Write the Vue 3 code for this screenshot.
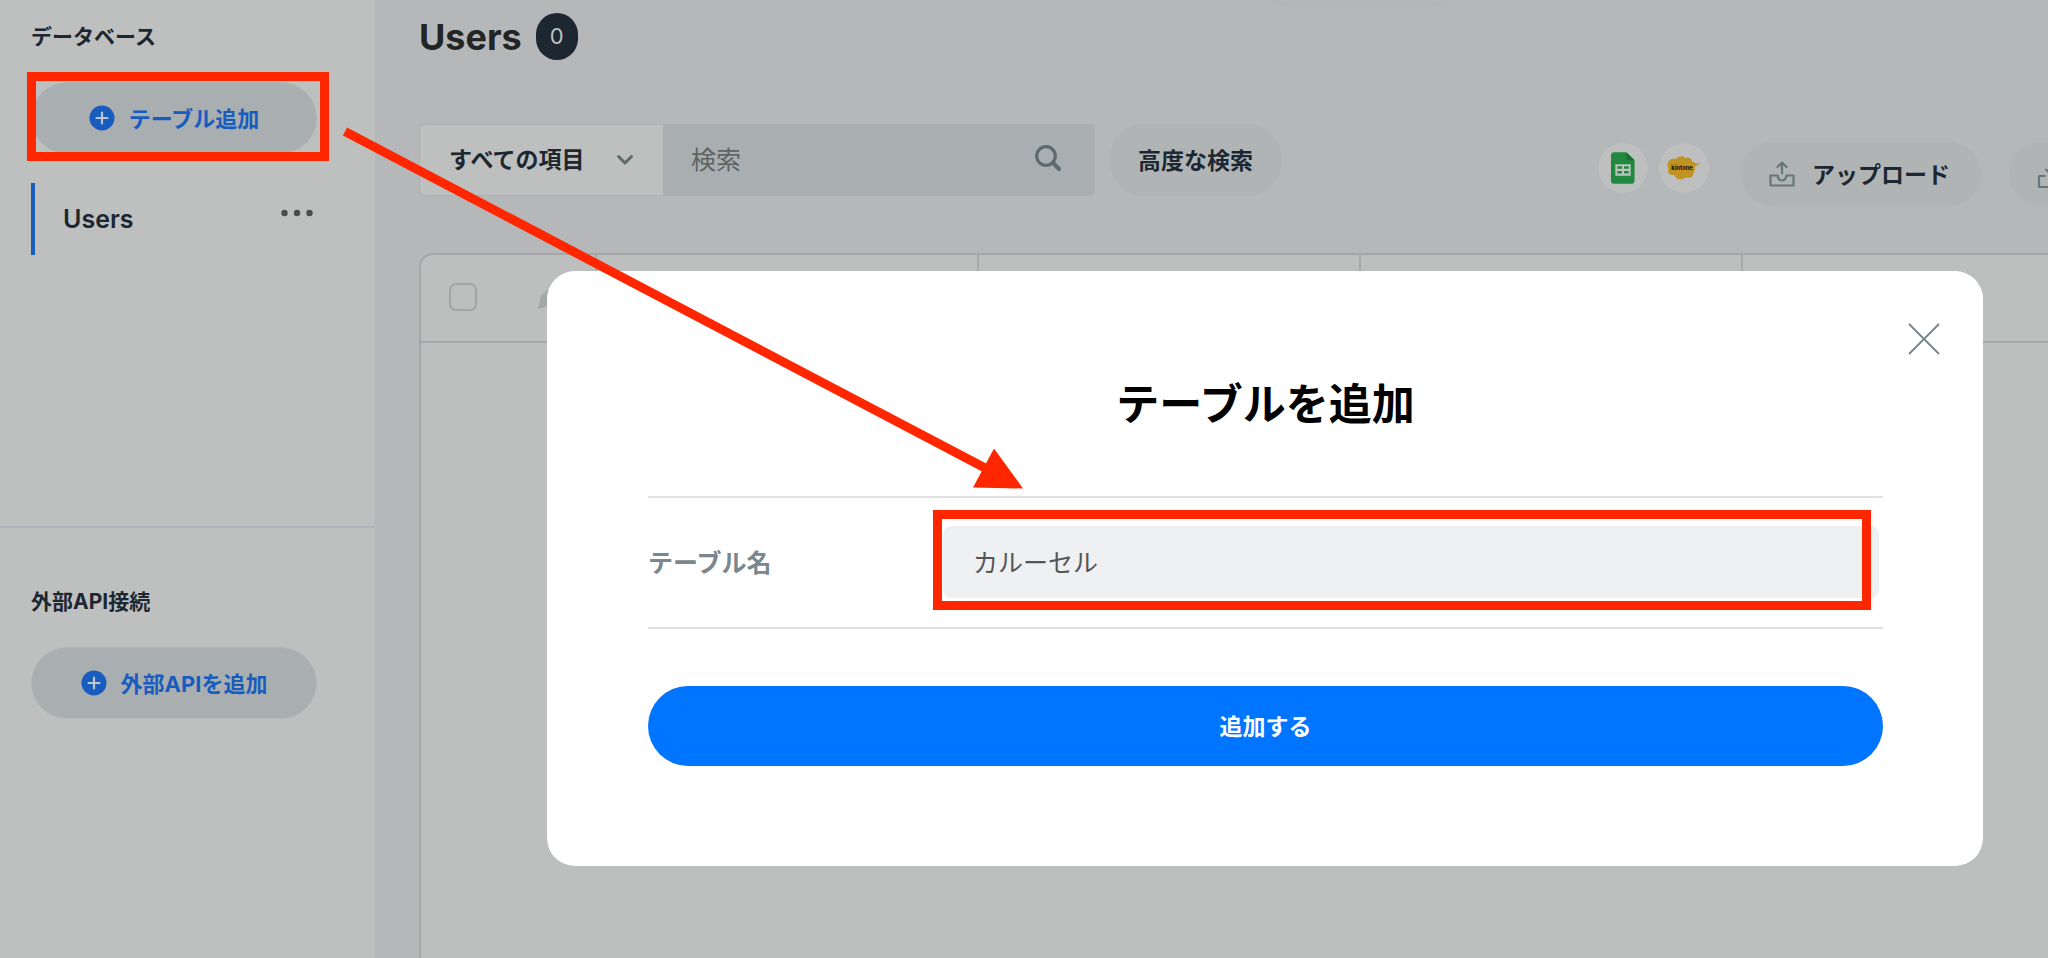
<script setup>
import { ref } from 'vue'

const scope = ref('all')
const keyword = ref('')
const tableName = ref('カルーセル')
const columns = ['a', 'b', 'c', 'd']
</script>

<template>
  <div class="page">
    <aside class="sidebar">
      <section class="group group-db">
        <h2 class="group-title">データベース</h2>
        <div class="marked">
          <button class="add-btn" type="button">
            <svg class="plus" viewBox="0 0 26 26" aria-hidden="true">
              <circle cx="13" cy="13" r="12.5" fill="#185dbe" />
              <path d="M13 7.5v11M7.5 13h11" stroke="#bec6ce" stroke-width="2.2" stroke-linecap="round" />
            </svg>
            <span class="btn-text">テーブル追加</span>
          </button>
          <span class="frame frame-add"></span>
        </div>
        <div class="table-item">
          <a class="table-link" href="#users">Users</a>
          <button class="more" type="button" aria-label="メニュー">
            <svg viewBox="0 0 34 8" aria-hidden="true" fill="#4b4d4d">
              <circle cx="4.5" cy="4" r="3.2" /><circle cx="17" cy="4" r="3.2" /><circle cx="29.5" cy="4" r="3.2" />
            </svg>
          </button>
        </div>
      </section>
      <section class="group group-api">
        <h2 class="group-title">外部API接続</h2>
        <button class="add-btn" type="button">
          <svg class="plus" viewBox="0 0 26 26" aria-hidden="true">
            <circle cx="13" cy="13" r="12.5" fill="#185dbe" />
            <path d="M13 7.5v11M7.5 13h11" stroke="#bec6ce" stroke-width="2.2" stroke-linecap="round" />
          </svg>
          <span class="btn-text">外部APIを追加</span>
        </button>
      </section>
    </aside>

    <main class="main">
      <header class="head">
        <h1>Users</h1>
        <span class="count">0</span>
        <span class="tab-edge"></span>
      </header>

      <div class="toolbar">
        <form class="search" @submit.prevent>
          <div class="scope">
            <select v-model="scope" aria-label="検索対象">
              <option value="all">すべての項目</option>
            </select>
            <svg class="chevron" viewBox="0 0 18 12" aria-hidden="true">
              <path d="M2.5 2.5 9 9l6.5-6.5" fill="none" stroke="#5d6a6e" stroke-width="3" stroke-linecap="round" stroke-linejoin="round" />
            </svg>
          </div>
          <input v-model="keyword" class="keyword" type="text" placeholder="検索" aria-label="検索" />
          <button class="go" type="submit" aria-label="検索">
            <svg viewBox="0 0 28 28" aria-hidden="true" fill="none" stroke="#5d6a6e">
              <circle cx="12" cy="12" r="9.3" stroke-width="3.2" />
              <path d="m19 19 6 6" stroke-width="4" stroke-linecap="round" />
            </svg>
          </button>
        </form>
        <button class="pill advanced" type="button"><span class="btn-text">高度な検索</span></button>

        <div class="actions">
          <button class="round" type="button" aria-label="Google スプレッドシート">
            <svg viewBox="0 0 52 52" aria-hidden="true">
              <path d="M17 9.5h12.5L38 18v21a3.5 3.5 0 0 1-3.5 3.5H17a3.500 3.500 0 0 1-3.500-3.500V13A3.500 3.500 0 0 1 17 9.500z" fill="#20883f" />
              <path d="M29.500 9.500 38 18h-8.500z" fill="#1d6d35" />
              <path d="M18 22h16v12H18zM20 24.200v2.600h5v-2.600zM27 24.200v2.600h5v-2.600zM20 29.200v2.600h5v-2.600zM27 29.200v2.600h5v-2.600z" fill="#bec5bf" fill-rule="evenodd" />
            </svg>
          </button>
          <button class="round" type="button" aria-label="kintone">
            <svg viewBox="0 0 52 52" aria-hidden="true">
              <path d="M18 16.500c1.500-3.200 7.500-3.500 9.500-.7 3.200-1.300 6.700 0 7.200 3.700 1.600.2 2.400.8 3 1.700h5.800l-6 3c.2 3.600-.6 6-1.700 7.200-.3 3.200-2.800 5.200-5.600 4.700-1.200.3-2 .1-3-.5-2.400 3.600-9.600 3.200-11.200-2.400-5 .6-7.500-2.600-6.300-6.200-2.200-5.500.8-10.800 5.300-10.500 1 0 2 .1 3 0z" fill="#bf9324" />
              <text x="24" y="28" text-anchor="middle" class="logo-text">kintone</text>
            </svg>
          </button>
          <button class="pill upload" type="button">
            <svg viewBox="0 0 26 26" aria-hidden="true" fill="none" stroke="#66767a" stroke-width="2.2" stroke-linejoin="round" stroke-linecap="round">
              <path d="M13 12.500V2M8.500 6 13 1.500 17.500 6" />
              <path d="M1.500 14.500h7c.5 3 2 5 4.500 5s4-2 4.500-5h7V24.500h-23z" />
            </svg>
            <span class="btn-text">アップロード</span>
          </button>
          <button class="pill download" type="button" aria-label="ダウンロード">
            <svg viewBox="0 0 26 26" aria-hidden="true" fill="none" stroke="#66767a" stroke-width="2.2" stroke-linejoin="round">
              <path d="M8.500 6 13 10.500 17.500 6M8.500 13H2v11h22V13h-6.500" />
            </svg>
          </button>
        </div>
      </div>

      <div class="sheet">
        <table>
          <thead>
            <tr>
              <th class="pick">
                <div class="pick-row">
                  <input type="checkbox" aria-label="すべて選択" />
                  <svg viewBox="0 0 26 26" aria-hidden="true">
                    <path d="M1 25 4 12 16 1l9 9-11 11z" fill="#a0a8aa" />
                  </svg>
                </div>
              </th>
              <th v-for="c in columns" :key="c"></th>
            </tr>
          </thead>
        </table>
      </div>
    </main>

    <div class="modal-layer">
      <section class="modal" role="dialog" aria-modal="true" aria-labelledby="modal-title">
        <button class="close" type="button" aria-label="閉じる">
          <svg viewBox="0 0 32 32" aria-hidden="true">
            <path d="m1 1 30 30M31 1 1 31" stroke="#74858b" stroke-width="1.8" />
          </svg>
        </button>
        <h2 id="modal-title">テーブルを追加</h2>
        <form @submit.prevent>
          <div class="field">
            <label for="table-name">テーブル名</label>
            <div class="marked field-box">
              <input id="table-name" v-model="tableName" type="text" />
              <span class="frame frame-name"></span>
            </div>
          </div>
          <button class="submit" type="submit"><span class="btn-text">追加する</span></button>
        </form>
      </section>
    </div>

    <svg class="arrow" viewBox="0 0 680 360" aria-hidden="true">
      <path d="M2 3.500 644 341" stroke="#ff2600" stroke-width="9" />
      <path d="M651 320.500 680 360.500 630 359.500z" fill="#ff2600" />
    </svg>
  </div>
</template>

<style>
body {
  margin: 0;
}
</style>

<style scoped>
.page {
  position: relative;
  display: flex;
  min-height: 100vh;
  overflow: hidden;
  background: #b5b7b9;
  color: #1c2731;
  font-family: Inter, "Noto Sans CJK JP", sans-serif;
}
.page *,
.page *::before {
  box-sizing: border-box;
}
h1,
h2 {
  margin: 0;
}
button,
input,
select {
  margin: 0;
  padding: 0;
  border: 0;
  background: none;
  color: inherit;
  font: inherit;
}
svg {
  display: block;
  flex: none;
}
.btn-text {
  display: block;
  padding-bottom: 2px;
}

/* sidebar */
.sidebar {
  flex: none;
  width: 375px;
  background: #bec0bf;
}
.group {
  padding: 22px 58px 0 31px;
}
.group-db {
  min-height: 528px;
  border-bottom: 2px solid #aeb4b9;
}
.group-api {
  padding-top: 59px;
}
.group-title {
  margin-bottom: 30px;
  font-size: 21px;
  line-height: 30px;
  font-weight: 700;
}
.marked {
  position: relative;
}
.frame {
  position: absolute;
  border: 9px solid #ff2600;
  pointer-events: none;
}
.frame-add {
  inset: -10px -12px -7px -4px;
}
.frame-name {
  inset: -16px 8px -12px -10px;
}
.add-btn {
  display: flex;
  align-items: center;
  justify-content: center;
  gap: 14px;
  width: 100%;
  height: 72px;
  border: 1px solid #b1b7b9;
  border-radius: 36px;
  background: #a9afb1;
  color: #185dbe;
  font-size: 22px;
  font-weight: 700;
}
.plus {
  width: 26px;
  height: 26px;
}
.table-item {
  display: flex;
  align-items: center;
  justify-content: space-between;
  height: 72px;
  margin-top: 29px;
  padding-left: 28px;
  border-left: 4px solid #185dbe;
}
.table-link {
  color: inherit;
  font-size: 25px;
  font-weight: 600;
  text-decoration: none;
}
.more {
  padding: 0 3px 12px;
}
.more svg {
  width: 34px;
  height: 8px;
}

/* main area */
.main {
  flex: 1;
  display: flex;
  flex-direction: column;
  min-width: 0;
  padding-left: 44px;
}
.head {
  display: flex;
  align-items: center;
  gap: 14px;
  height: 60px;
  padding-top: 13px;
}
.head h1 {
  color: #222524;
  font-size: 36px;
  line-height: 48px;
  font-weight: 700;
}
.count {
  width: 42px;
  border-radius: 21px;
  background: #1c2731;
  color: #bec0bf;
  font-size: 22px;
  line-height: 47px;
  text-align: center;
}
.tab-edge {
  align-self: flex-start;
  width: 212px;
  height: 72px;
  margin-top: -78px;
  margin-left: 662px;
  border-radius: 36px;
  background: #b1b6b8;
}
.toolbar {
  display: flex;
  align-items: flex-start;
  margin-top: 64px;
  font-size: 23px;
}
.search {
  display: flex;
  flex: 0 1 676px;
  height: 72px;
  border: 1px solid #a9b1b4;
  border-radius: 6px;
  background: #a9afb1;
  overflow: hidden;
}
.scope {
  position: relative;
  width: 243px;
  background: #bec0bf;
}
.scope select {
  width: 100%;
  height: 100%;
  padding-left: 29px;
  appearance: none;
  font-weight: 700;
}
.chevron {
  position: absolute;
  top: 29px;
  right: 29px;
  width: 18px;
  height: 12px;
  pointer-events: none;
}
.keyword {
  flex: 1;
  min-width: 0;
  padding-left: 28px;
  font-size: 25px;
}
.keyword::placeholder {
  color: #5f6364;
  opacity: 1;
}
.go {
  padding: 0 32px 4px 0;
}
.go svg {
  width: 28px;
  height: 28px;
}
.pill {
  border-radius: 36px;
  background: #b0b4b5;
  font-weight: 700;
  white-space: nowrap;
}
.advanced {
  height: 72px;
  margin-left: 14px;
  padding: 0 29px;
}
.actions {
  display: flex;
  margin-top: 18px;
  margin-left: auto;
}
.round {
  width: 52px;
  height: 52px;
  margin-right: 9px;
  border: 1px solid #b0b7be;
  border-radius: 50%;
  background: #bec0bf;
}
.round svg {
  width: 50px;
  height: 50px;
}
.logo-text {
  fill: #1d1b10;
  font-size: 6px;
  font-weight: 800;
}
.upload {
  display: flex;
  align-items: center;
  gap: 17px;
  height: 64px;
  margin-left: 22px;
  padding: 0 31px 0 28px;
}
.upload svg,
.download svg {
  width: 26px;
  height: 26px;
}
.download {
  width: 39px;
  height: 64px;
  margin-left: 28px;
  padding: 4px 0 0 28px;
  border-radius: 36px 0 0 36px;
  overflow: hidden;
}
.sheet {
  flex: 1;
  margin-top: 47px;
  border: 2px solid #a3a7a8;
  border-width: 2px 0 0 2px;
  border-radius: 14px 0 0 0;
  background: #bdbfbe;
}
table {
  width: 100%;
  table-layout: fixed;
  border-collapse: collapse;
}
th {
  width: 382px;
  height: 87px;
  padding: 0;
  border-right: 2px solid #a6aaab;
  border-bottom: 2px solid #a3a7a8;
}
th.pick {
  width: 175px;
}
th:last-child {
  width: auto;
  border-right: 0;
}
.pick-row {
  display: flex;
  align-items: center;
  gap: 60px;
  padding: 0 0 2px 28px;
}
.pick-row input {
  width: 28px;
  height: 28px;
  appearance: none;
  border: 2px solid #a2a5a6;
  border-radius: 7px;
}
.pick-row svg {
  width: 26px;
  height: 26px;
}

/* dialog */
.modal-layer {
  position: absolute;
  inset: 0;
  padding: 271px 65px 0 547px;
}
.modal {
  position: relative;
  padding: 103px 100px 100px 101px;
  border-radius: 28px;
  background: #fff;
}
.close {
  position: absolute;
  top: 52px;
  right: 43px;
}
.close svg {
  width: 32px;
  height: 32px;
}
.modal h2 {
  color: #000;
  font-size: 43px;
  line-height: 60px;
  font-weight: 700;
  text-align: center;
}
.field {
  display: flex;
  align-items: center;
  margin-top: 62px;
  padding: 28px 4px 29px 0;
  border: 2px solid #e0e2e2;
  border-width: 2px 0;
  font-size: 25px;
}
.field label {
  width: 295px;
  padding-bottom: 2px;
  color: #7a878c;
  font-weight: 700;
}
.field-box {
  flex: 1;
}
.field-box input {
  display: block;
  width: 100%;
  height: 72px;
  padding: 0 30px 2px;
  border-radius: 8px;
  background: #eef0f2;
  color: #555;
}
.submit {
  display: block;
  width: 100%;
  height: 80px;
  margin-top: 57px;
  border-radius: 40px;
  background: #0075ff;
  color: #fff;
  font-size: 23px;
  font-weight: 700;
}
.arrow {
  position: absolute;
  top: 128px;
  left: 343px;
  width: 680px;
  height: 360px;
  overflow: visible;
  pointer-events: none;
}
</style>
